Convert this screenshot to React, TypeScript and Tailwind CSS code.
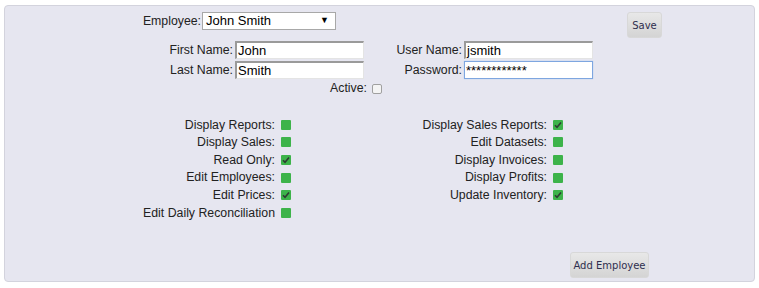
import React from 'react';

type Perm = { label: string; checked?: boolean };

const leftPerms: Perm[] = [
  { label: 'Display Reports:' },
  { label: 'Display Sales:' },
  { label: 'Read Only:', checked: true },
  { label: 'Edit Employees:' },
  { label: 'Edit Prices:', checked: true },
  { label: 'Edit Daily Reconciliation' },
];

const rightPerms: Perm[] = [
  { label: 'Display Sales Reports:', checked: true },
  { label: 'Edit Datasets:' },
  { label: 'Display Invoices:' },
  { label: 'Display Profits:' },
  { label: 'Update Inventory:', checked: true },
];

function GreenBox({ checked }: { checked?: boolean }) {
  return (
    <span className="flex items-center justify-center w-[10px] h-[10px] bg-[#3db34a] rounded-[1px]">
      {checked && (
        <svg width="8" height="8" viewBox="0 0 8 8">
          <path d="M1 4.2 L3 6.2 L7 1.5" fill="none" stroke="#2f3a33" strokeWidth="1.6" />
        </svg>
      )}
    </span>
  );
}

function TextBox({ value, focused }: { value: string; focused?: boolean }) {
  return (
    <div
      className={`w-[129px] h-[18px] bg-white flex items-center pl-[1px] text-[13px] text-black leading-none ${
        focused
          ? 'border border-[#7ea6e0] shadow-[0_0_1px_#9cc0f0]'
          : 'border-t-2 border-l-2 border-b border-r border-t-[#9a9a9a] border-l-[#9a9a9a] border-b-[#e4e4e4] border-r-[#e4e4e4]'
      }`}
    >
      {value}
    </div>
  );
}

function Button({ label, className }: { label: string; className?: string }) {
  return (
    <button
      className={`h-[26px] rounded-[3px] bg-gradient-to-b from-[#e8e8e8] to-[#d4d4d4] border border-[#d8d8d8] text-[10px] text-[#2e2e4e] font-['DejaVu_Sans',sans-serif] ${className ?? ''}`}
    >
      {label}
    </button>
  );
}

export default function App() {
  return (
    <div className="w-[759px] h-[288px] bg-white pt-[5px] pl-[4px] font-['Liberation_Sans',Arial,sans-serif] text-[12.3px] text-[#222]">
      <div className="w-[751px] h-[277px] bg-[#e6e6f0] border border-[#d3d3dd] rounded-[4px] flex flex-col">
        <div className="flex">
          <div className="w-[622px] flex flex-col">
            <div className="flex items-center mt-[6px] h-[18px]">
              <span className="w-[196px] text-right">Employee:</span>
              <div className="ml-[1px] w-[134px] h-[18px] bg-white border border-[#a8a8a8] flex items-center justify-between pl-[3px] pr-[6px] text-[13px] text-black">
                <span>John Smith</span>
                <span className="text-[9px]">▼</span>
              </div>
            </div>
            <div className="flex items-center mt-[11px] h-[18px]">
              <span className="w-[228px] text-right">First Name:</span>
              <div className="ml-[2px]">
                <TextBox value="John" />
              </div>
              <span className="w-[98px] text-right">User Name:</span>
              <div className="ml-[2px]">
                <TextBox value="jsmith" />
              </div>
            </div>
            <div className="flex items-center mt-[2px] h-[18px]">
              <span className="w-[228px] text-right">Last Name:</span>
              <div className="ml-[2px]">
                <TextBox value="Smith" />
              </div>
              <span className="w-[98px] text-right">Password:</span>
              <div className="ml-[2px]">
                <TextBox value="************" focused />
              </div>
            </div>
            <div className="flex items-center mt-[3px] h-[13px]">
              <span className="w-[362px] text-right">Active:</span>
              <span className="ml-[5px] w-[10px] h-[10px] bg-[#f4f4f4] border border-[#a0a0a0] rounded-[2px]" />
            </div>
          </div>
          <Button label="Save" className="mt-[6px] w-[35px]" />
        </div>

        <div className="flex mt-[21px]">
          <div className="flex flex-col">
            {leftPerms.map((p) => (
              <div key={p.label} className="flex items-center h-[17.6px]">
                <span className="w-[270px] text-right">{p.label}</span>
                <span className="ml-[6px]">
                  <GreenBox checked={p.checked} />
                </span>
              </div>
            ))}
          </div>
          <div className="flex flex-col">
            {rightPerms.map((p) => (
              <div key={p.label} className="flex items-center h-[17.6px]">
                <span className="w-[256px] text-right">{p.label}</span>
                <span className="ml-[6px]">
                  <GreenBox checked={p.checked} />
                </span>
              </div>
            ))}
          </div>
        </div>

        <div className="flex mt-auto mb-[3px]">
          <Button label="Add Employee" className="ml-[565px] w-[79px]" />
        </div>
      </div>
    </div>
  );
}
